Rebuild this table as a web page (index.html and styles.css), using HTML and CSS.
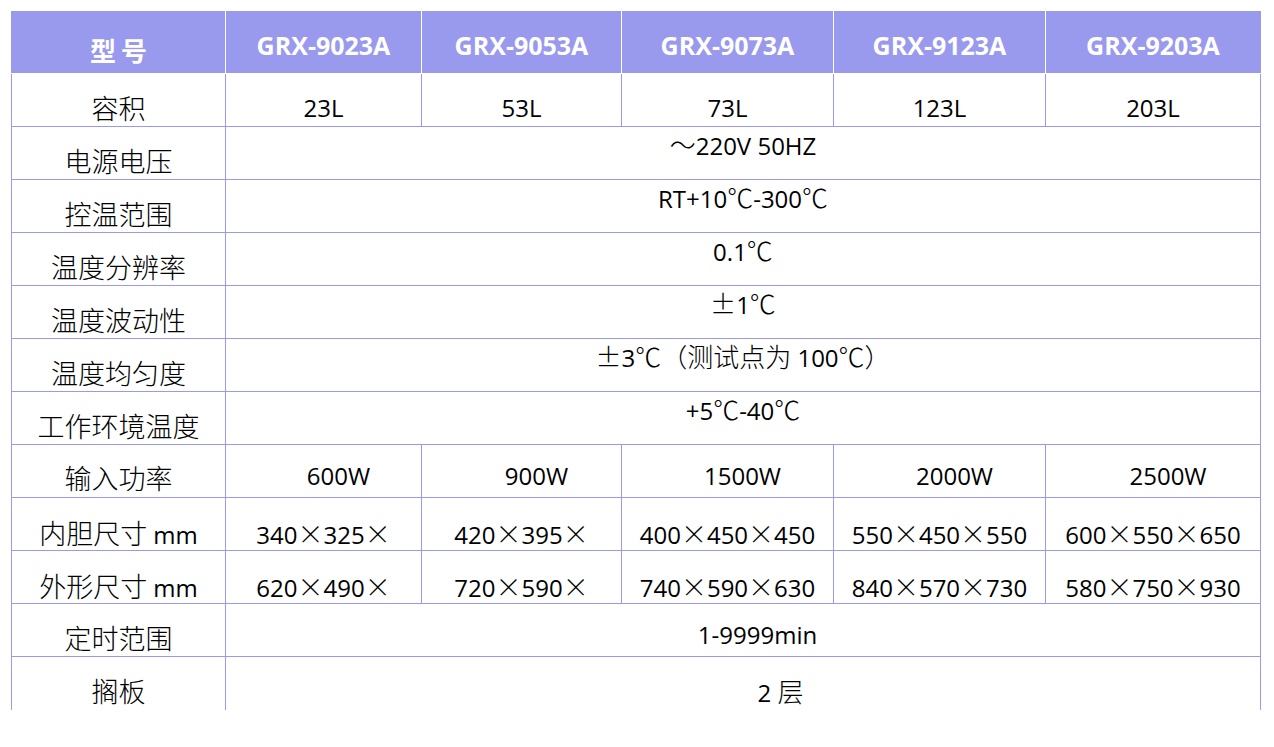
FILE: index.html
```html
<!DOCTYPE html>
<html lang="zh-CN">
<head>
<meta charset="utf-8">
<title>GRX 规格参数</title>
<link rel="stylesheet" href="styles.css">
</head>
<body>
<table class="spec">
  <colgroup>
    <col class="w1"><col class="w2"><col class="w3"><col class="w4"><col class="w5"><col class="w6">
  </colgroup>
  <thead>
    <tr>
      <th class="hl">型号</th>
      <th>GRX-9023A</th>
      <th>GRX-9053A</th>
      <th>GRX-9073A</th>
      <th>GRX-9123A</th>
      <th>GRX-9203A</th>
    </tr>
  </thead>
  <tbody>
    <tr>
      <td class="lb">容积</td>
      <td>23L</td><td>53L</td><td>73L</td><td>123L</td><td>203L</td>
    </tr>
    <tr>
      <td class="lb">电源电压</td>
      <td colspan="5" class="up"><span class="c">～</span>220V 50HZ</td>
    </tr>
    <tr>
      <td class="lb">控温范围</td>
      <td colspan="5" class="up">RT+10<span class="c">℃</span>-300<span class="c">℃</span></td>
    </tr>
    <tr>
      <td class="lb">温度分辨率</td>
      <td colspan="5" class="up">0.1<span class="c">℃</span></td>
    </tr>
    <tr>
      <td class="lb">温度波动性</td>
      <td colspan="5" class="up"><span class="c">±</span>1<span class="c">℃</span></td>
    </tr>
    <tr>
      <td class="lb">温度均匀度</td>
      <td colspan="5" class="up"><span class="c">±</span>3<span class="c">℃（测试点为</span> 100<span class="c">℃）</span></td>
    </tr>
    <tr>
      <td class="lb">工作环境温度</td>
      <td colspan="5" class="up">+5<span class="c">℃</span>-40<span class="c">℃</span></td>
    </tr>
    <tr class="pw">
      <td class="lb">输入功率</td>
      <td class="sh">600W</td><td class="sh">900W</td><td class="sh">1500W</td><td class="sh">2000W</td><td class="sh">2500W</td>
    </tr>
    <tr class="dim">
      <td class="lb">内胆尺寸 <span class="m">mm</span></td>
      <td>340<span class="c">×</span>325<span class="c">×</span></td>
      <td>420<span class="c">×</span>395<span class="c">×</span></td>
      <td>400<span class="c">×</span>450<span class="c">×</span>450</td>
      <td>550<span class="c">×</span>450<span class="c">×</span>550</td>
      <td>600<span class="c">×</span>550<span class="c">×</span>650</td>
    </tr>
    <tr class="dim">
      <td class="lb">外形尺寸 <span class="m">mm</span></td>
      <td>620<span class="c">×</span>490<span class="c">×</span></td>
      <td>720<span class="c">×</span>590<span class="c">×</span></td>
      <td>740<span class="c">×</span>590<span class="c">×</span>630</td>
      <td>840<span class="c">×</span>570<span class="c">×</span>730</td>
      <td>580<span class="c">×</span>750<span class="c">×</span>930</td>
    </tr>
    <tr>
      <td class="lb">定时范围</td>
      <td colspan="5" class="timer">1-9999min</td>
    </tr>
    <tr class="last">
      <td class="lb">搁板</td>
      <td colspan="5" class="shelf">2 <span class="c">层</span></td>
    </tr>
  </tbody>
</table>
</body>
</html>
```

FILE: styles.css
```css
body {
  margin: 0;
  padding: 11px 0 0 11px;
  background: #ffffff;
  color: #000000;
  font-family: "Open Sans", "Noto Sans CJK SC", sans-serif;
}

.spec {
  border-collapse: collapse;
  table-layout: fixed;
  width: 1249px;
}

.w1 { width: 214px; }
.w2 { width: 196px; }
.w3 { width: 200px; }
.w4 { width: 212px; }
.w5 { width: 212px; }
.w6 { width: 215px; }

.spec th {
  background: #9999ee;
  color: #ffffff;
  font-weight: 700;
  font-size: 25px;
  line-height: 30px;
  height: 62px;
  padding: 4px 0 0;
  border: 1px solid #ffffff;
  border-top-color: #9999ee;
  box-sizing: border-box;
  text-align: center;
}

.spec th:first-child { border-left-color: #9999ee; }
.spec th:last-child { border-right-color: #9999ee; }

.spec th.hl {
  font-family: "Noto Sans CJK SC", sans-serif;
  font-size: 26px;
  letter-spacing: 5px;
  padding: 14px 0 0 5px;
}

.spec td {
  border: 1px solid #9999ee;
  font-size: 24px;
  line-height: 30px;
  height: 53px;
  padding: 16px 0 0;
  box-sizing: border-box;
  text-align: center;
  vertical-align: middle;
  white-space: nowrap;
}

.spec td.lb {
  font-family: "Noto Sans CJK SC", sans-serif;
  font-size: 27px;
  font-weight: 300;
}

.spec td.lb .m {
  font-family: "Open Sans", sans-serif;
  font-size: 24px;
  font-weight: 400;
}

.c {
  font-family: "Noto Sans CJK SC", sans-serif;
  font-size: 26px;
  font-weight: 300;
}

.spec td.up {
  padding: 0 0 16px;
}

.pw td.lb { padding-top: 14px; }
.spec td.sh { padding: 9px 0 0 30px; }

.dim td { padding-top: 20px; }

.spec td.timer { padding: 9px 0 0 29px; }

.spec td.shelf { padding: 17px 0 0 75px; }

.last td { border-bottom: none; }
```
